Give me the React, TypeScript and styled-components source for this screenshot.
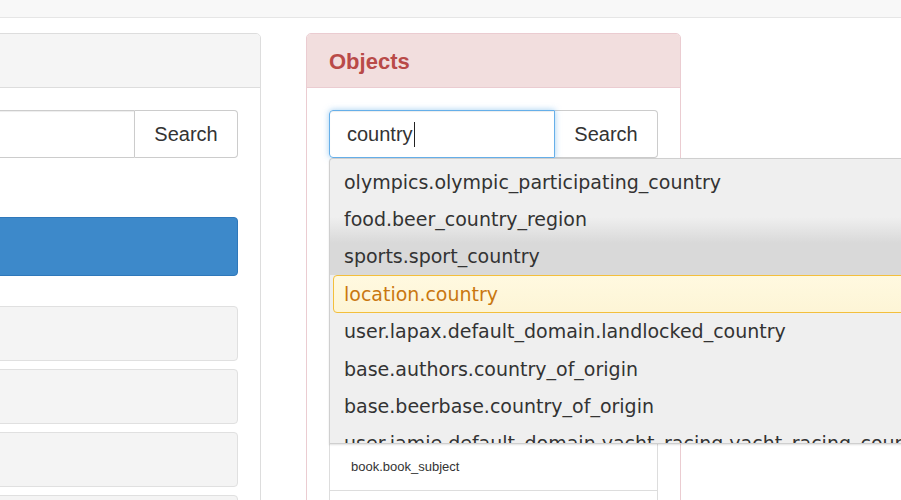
import React from "react";
import styled, { createGlobalStyle } from "styled-components";

const Global = createGlobalStyle`
  html, body { margin: 0; padding: 0; background: #fff; overflow: hidden; }
  body { font-family: "Liberation Sans", Arial, sans-serif; color: #333; }
`;

const TopBar = styled.div`
  height: 17px;
  background: #f8f8f8;
  border-bottom: 1px solid #e6e6e6;
`;

const Columns = styled.div`
  display: flex;
  gap: 45px;
  margin-top: 15px;
  margin-left: -114px;
`;

const Panel = styled.div<{ $tone: "default" | "danger" }>`
  flex: none;
  width: 375px;
  box-sizing: border-box;
  min-height: 520px;
  border: 1px solid ${(p) => (p.$tone === "danger" ? "#ebccd1" : "#dddddd")};
  border-radius: 5px 5px 0 0;
  background: #fff;
`;

const PanelHeader = styled.div<{ $tone: "default" | "danger" }>`
  height: 54px;
  box-sizing: border-box;
  padding: 2px 22px 0;
  display: flex;
  align-items: center;
  background: ${(p) => (p.$tone === "danger" ? "#f2dede" : "#f5f5f5")};
  border-bottom: 1px solid ${(p) => (p.$tone === "danger" ? "#ebccd1" : "#dddddd")};
  border-radius: 4px 4px 0 0;
  color: #b94a48;
  font-size: 22px;
  font-weight: bold;
`;

const PanelBody = styled.div`
  padding: 22px 22px 0;
`;

const InputGroup = styled.div`
  position: relative;
  display: flex;
  height: 48px;
`;

const TextInput = styled.div<{ $focus?: boolean }>`
  flex: 1;
  box-sizing: border-box;
  border: 1px solid ${(p) => (p.$focus ? "#66afe9" : "#cccccc")};
  box-shadow: ${(p) =>
    p.$focus
      ? "inset 0 1px 1px rgba(0,0,0,.075), 0 0 6px rgba(102,175,233,.6)"
      : "inset 0 1px 1px rgba(0,0,0,.075)"};
  border-radius: 4px 0 0 4px;
  padding: 1px 17px 0;
  display: flex;
  align-items: center;
  font-size: 20px;
  color: #333;
  position: relative;
  z-index: 1;
`;

const Caret = styled.span`
  display: inline-block;
  width: 1px;
  height: 25px;
  background: #222;
  margin-left: 1px;
`;

const SearchButton = styled.div`
  flex: none;
  width: 103px;
  box-sizing: border-box;
  border: 1px solid #cccccc;
  border-left: none;
  border-radius: 0 4px 4px 0;
  background: #fff;
  display: flex;
  align-items: center;
  justify-content: center;
  padding-top: 1px;
  font-size: 20px;
  color: #333;
`;

const PrimaryButton = styled.div`
  margin-top: 59px;
  height: 59px;
  box-sizing: border-box;
  background: #3d89ca;
  border: 1px solid #2f78ba;
  border-radius: 4px;
`;

const WellList = styled.div`
  margin-top: 30px;
  display: flex;
  flex-direction: column;
  gap: 8px;
`;

const Well = styled.div`
  height: 55px;
  box-sizing: border-box;
  background: #f4f4f4;
  border: 1px solid #e0e0e0;
  border-radius: 4px;
`;

const ResultList = styled.div`
  margin-top: 20px;
  border: 1px solid #dddddd;
  border-radius: 4px;
`;

const ResultItem = styled.div<{ $tall?: boolean }>`
  height: ${(p) => (p.$tall ? 48 : 44)}px;
  box-sizing: border-box;
  padding: 0 21px;
  display: flex;
  align-items: center;
  font-size: 13px;
  color: #333;
  border-bottom: 1px solid #dddddd;
`;

const Dropdown = styled.div`
  position: absolute;
  top: 48px;
  left: 0;
  width: 640px;
  height: 286px;
  overflow: hidden;
  box-sizing: border-box;
  padding-top: 4px;
  background: linear-gradient(
    to bottom,
    #efefef 0px,
    #efefef 58px,
    #d9d9d9 84px,
    #d9d9d9 116px,
    #efefef 116px
  );
  border: 1px solid #cfcfcf;
  border-right: none;
  border-radius: 4px 0 0 0;
  box-shadow: 0 1px 2px rgba(0, 0, 0, 0.12);
  z-index: 5;
  font-family: "DejaVu Sans", Verdana, sans-serif;
`;

const Option = styled.div<{ $active?: boolean }>`
  height: 37.4px;
  box-sizing: border-box;
  margin: 0 4px 0 3px;
  padding: 0 10px;
  display: flex;
  align-items: center;
  white-space: nowrap;
  font-size: 19px;
  color: ${(p) => (p.$active ? "#c97710" : "#333")};
  border: 1px solid ${(p) => (p.$active ? "#f3bf3c" : "transparent")};
  border-radius: 4px;
  background: ${(p) => (p.$active ? "linear-gradient(#fff9e0, #fdf5d6)" : "transparent")};
`;

const options = [
  "olympics.olympic_participating_country",
  "food.beer_country_region",
  "sports.sport_country",
  "location.country",
  "user.lapax.default_domain.landlocked_country",
  "base.authors.country_of_origin",
  "base.beerbase.country_of_origin",
  "user.jamie.default_domain.yacht_racing.yacht_racing_country",
];

const results = [
  "location.country",
  "olympics.olympic_participating_country",
  "food.beer_country_region",
  "sports.sport_country",
  "base.authors.country_of_origin",
  "base.beerbase.country_of_origin",
  "book.book_subject",
  "film.film_subject",
];

export default function App() {
  return (
    <>
      <Global />
      <TopBar />
      <Columns>
        <Panel $tone="default">
          <PanelHeader $tone="default" />
          <PanelBody>
            <InputGroup>
              <TextInput />
              <SearchButton>Search</SearchButton>
            </InputGroup>
            <PrimaryButton />
            <WellList>
              <Well />
              <Well />
              <Well />
              <Well />
            </WellList>
          </PanelBody>
        </Panel>
        <Panel $tone="danger">
          <PanelHeader $tone="danger">Objects</PanelHeader>
          <PanelBody>
            <InputGroup>
              <TextInput $focus>
                country
                <Caret />
              </TextInput>
              <SearchButton>Search</SearchButton>
              <Dropdown>
                {options.map((o) => (
                  <Option key={o} $active={o === "location.country"}>
                    {o}
                  </Option>
                ))}
              </Dropdown>
            </InputGroup>
            <ResultList>
              {results.map((r, i) => (
                <ResultItem key={r} $tall={i >= 6}>
                  {r}
                </ResultItem>
              ))}
            </ResultList>
          </PanelBody>
        </Panel>
      </Columns>
    </>
  );
}
